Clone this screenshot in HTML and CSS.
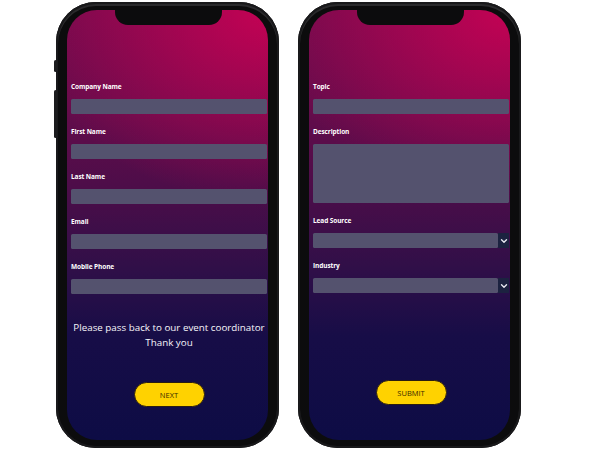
FILE: index.html
```html
<!DOCTYPE html>
<html>
<head>
<meta charset="utf-8">
<link rel="stylesheet" href="styles.css">
</head>
<body>
<div class="stage">
  <div class="phone phone-left">
    <span class="side-btn side-btn-a"></span>
    <span class="side-btn side-btn-b"></span>
    <div class="screen">
      <div class="notch"></div>
      <div class="form">
        <div class="row"><div class="label">Company Name</div><div class="field"></div></div>
        <div class="row"><div class="label">First Name</div><div class="field"></div></div>
        <div class="row"><div class="label">Last Name</div><div class="field"></div></div>
        <div class="row"><div class="label">Email</div><div class="field"></div></div>
        <div class="row"><div class="label">Mobile Phone</div><div class="field"></div></div>
        <p class="note">Please pass back to our event coordinator<br>Thank you</p>
        <button class="pill">NEXT</button>
      </div>
    </div>
  </div>
  <div class="phone phone-right">
    <div class="screen">
      <div class="notch"></div>
      <div class="form">
        <div class="row"><div class="label">Topic</div><div class="field"></div></div>
        <div class="row"><div class="label">Description</div><div class="field field-tall"></div></div>
        <div class="row"><div class="label">Lead Source</div>
          <div class="select"><div class="field"></div><div class="chev"><svg viewBox="0 0 10 10" width="10" height="10"><path d="M2.5 3.8 L5 6.3 L7.5 3.8" fill="none" stroke="#e8e8f0" stroke-width="1.4" stroke-linecap="round" stroke-linejoin="round"/></svg></div></div>
        </div>
        <div class="row"><div class="label">Industry</div>
          <div class="select"><div class="field"></div><div class="chev"><svg viewBox="0 0 10 10" width="10" height="10"><path d="M2.5 3.8 L5 6.3 L7.5 3.8" fill="none" stroke="#e8e8f0" stroke-width="1.4" stroke-linecap="round" stroke-linejoin="round"/></svg></div></div>
        </div>
        <button class="pill pill-submit">SUBMIT</button>
      </div>
    </div>
  </div>
</div>
</body>
</html>
```
FILE: styles.css
```css
html, body {
  margin: 0;
  padding: 0;
  background: #ffffff;
  width: 600px;
  height: 450px;
  overflow: hidden;
  font-family: "Open Sans", "Noto Sans", sans-serif;
}
.stage {
  display: flex;
  gap: 19px;
  padding: 2px 0 0 56px;
}
.phone {
  position: relative;
  width: 223px;
  height: 446px;
  box-sizing: border-box;
  padding: 8px 11px;
  background: #0c0c0d;
  border-radius: 40px;
  box-shadow: inset 0 0 0 2px #19191b, inset 0 2px 0 2px #2a2a2c;
}
.side-btn {
  position: absolute;
  left: -2px;
  width: 3px;
  background: #1c1c1e;
  border-radius: 2px;
}
.side-btn-a { top: 58px; height: 12px; }
.side-btn-b { top: 88px; height: 48px; }
.screen {
  position: relative;
  height: 100%;
  border-radius: 30px;
  overflow: hidden;
  background:
    radial-gradient(ellipse 120% 45% at 100% 0%, rgba(210, 0, 85, 0.85) 0%, rgba(210, 0, 85, 0) 100%),
    linear-gradient(to bottom, #720b4d 0%, #650c4b 22%, #4c0d49 42%, #300f48 60%, #170d47 76%, #0d0c45 100%);
}
.notch {
  position: absolute;
  top: 0;
  left: 50%;
  width: 107px;
  height: 15px;
  margin-left: -53px;
  background: #0c0c0d;
  border-radius: 0 0 13px 13px;
}
.form {
  display: flex;
  flex-direction: column;
  height: 100%;
  box-sizing: border-box;
  padding: 72px 1px 33px 4px;
}
.row {
  display: flex;
  flex-direction: column;
  margin-bottom: 13px;
}
.label {
  height: 10px;
  line-height: 10px;
  font-size: 6.5px;
  font-weight: 700;
  color: #ffffff;
  margin-bottom: 7px;
  letter-spacing: -0.1px;
}
.field {
  height: 15px;
  background: #54526e;
  border-radius: 1.5px;
}
.field-tall {
  height: 59px;
}
.select {
  display: flex;
  height: 15px;
}
.select .field {
  flex: 1;
}
.chev {
  width: 11px;
  height: 15px;
  background: #1c2240;
  display: flex;
  align-items: center;
  justify-content: center;
}
.note {
  margin: 13px 0 0;
  text-align: center;
  color: #f7f6fa;
  font-size: 9.8px;
  line-height: 15px;
}
.pill {
  margin: auto auto 0;
  width: 71px;
  height: 25px;
  border: 1px solid #2a1d10;
  border-radius: 13px;
  background: #ffd200;
  color: #3b2c00;
  font-family: "Open Sans", sans-serif;
  font-size: 7.5px;
  padding: 0;
}
.pill-submit {
  margin-bottom: 2px;
}
```
